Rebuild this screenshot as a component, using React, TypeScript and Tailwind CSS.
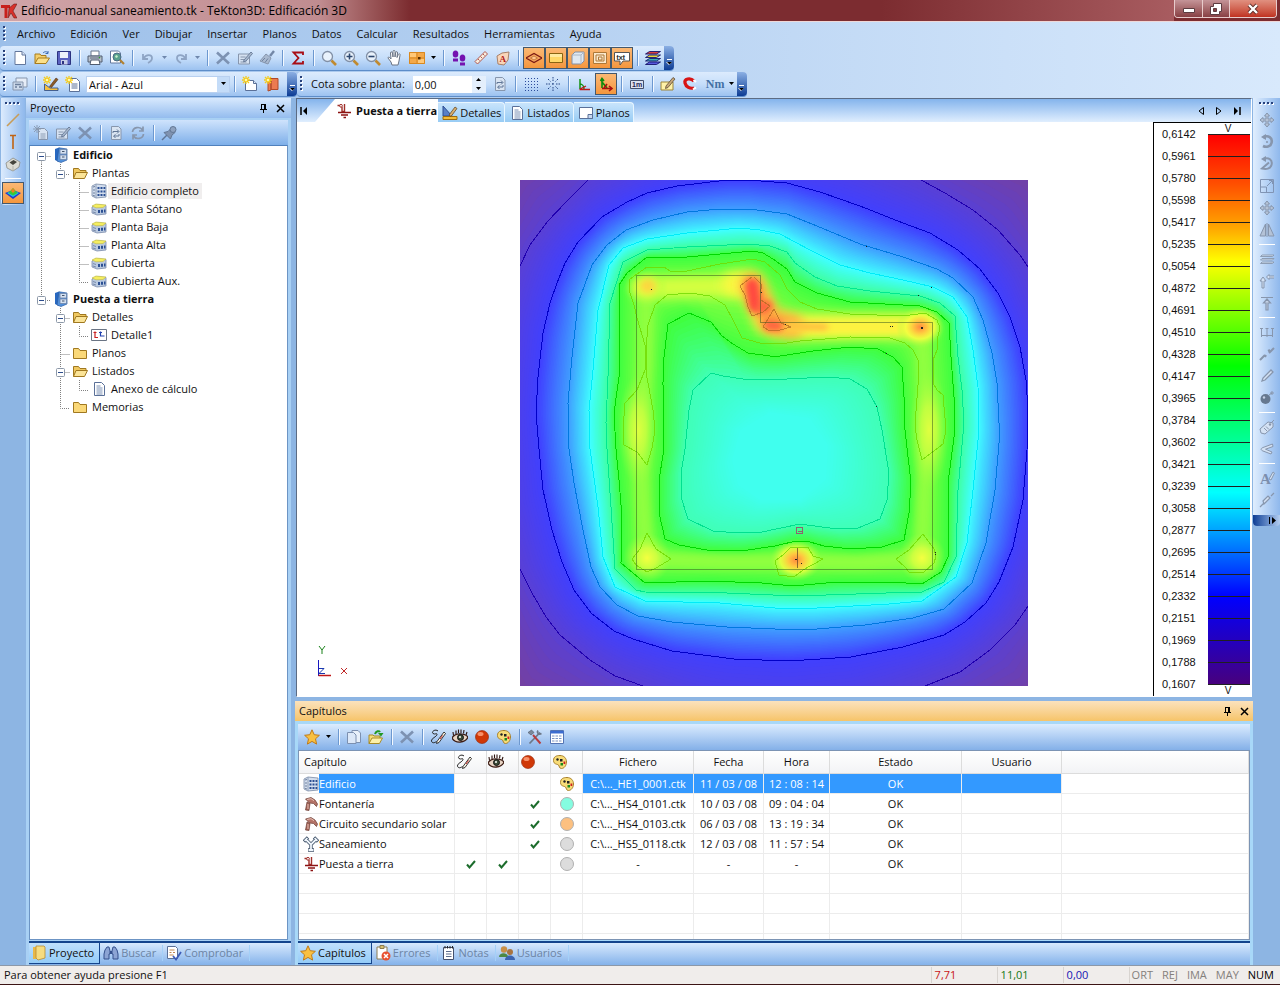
import React from "react";

/* ---------- icons (16x16 grid) ---------- */

const GREY = "#8796ad";

const sparkle = (
  <>
    <path d="M4 0v8M0 4h8M1 1l6 6M7 1L1 7" stroke="#f6cc18" strokeWidth="1.300" />
    <circle cx="4" cy="4" r="1.300" fill="#fff8b0" />
  </>
);

const building = (
  <>
    <path d="M1 3l4-2 10 1v12l-10 1-4-2z" fill="#d3deee" stroke="#7789a5" strokeWidth=".8" />
    <path d="M5 1v14" stroke="#8f9fb8" />
    <path d="M2 4l2-.5M2 7h2M2 10h2M2 12.500l2 .5" stroke="#6f809c" />
    <path d="M6.500 4h2v2h-2zM9.500 4h2v2h-2zM12.500 4h1.800v2h-1.800zM6.500 7.500h2v2h-2zM9.500 7.500h2v2h-2zM12.500 7.500h1.800v2h-1.800zM6.500 11h2v2h-2zM9.500 11h2v2h-2zM12.500 11h1.800v2h-1.800z" fill="#2b4f93" />
  </>
);

const palette = (
  <>
    <path d="M8 1.500c4 0 6.500 2.800 6.500 6.500S12 14.500 9.500 14.500 7.500 12 6.500 11 1.500 10.500 1.500 6.500 4.500 1.500 8 1.500z" fill="#f8dc78" stroke="#a8802a" />
    <circle cx="5.500" cy="5.500" r="1.200" fill="#222" />
    <path d="M8 5h2.500v2.500H8z" fill="#222" />
    <path d="M8.500 9h2.500v2.500H8.500z" fill="#1a8a1a" />
    <path d="M11.500 7.500h1.800v2.500h-1.800z" fill="#d02020" />
  </>
);

const ground = (
  <>
    <path d="M1.500 2.500h3M8.500 1v8M6 4v4.500h2" stroke="#a0302a" strokeWidth="1.400" fill="none" />
    <circle cx="5" cy="2.800" r="1.400" fill="#fff" stroke="#a0302a" />
    <path d="M2 9.500h13M5 12h7M7.500 14.500h2.500" stroke="#8c1212" strokeWidth="1.700" />
  </>
);

const sheet = <path d="M3.500 1.500h7l3 3v10h-10z" fill="#fff" stroke="#5a7098" />;

const star = <path d="M8 .8l2.200 4.900 5.200.6-3.900 3.500 1.100 5.300L8 12.400l-4.600 2.700 1.100-5.300L.6 6.300l5.200-.6z" fill="#f9c040" stroke="#c07a18" />;

const ICONS: Record<string, React.ReactNode> = {
  logo: (
    <>
      <path d="M0 2h9v3H6.500v10h-3V5H0z" fill="#c8201c" />
      <path d="M8 5l-1 10 3-5 3 5h3l-4-7 4-7h-3z" fill="#d8302a" stroke="#5a1210" strokeWidth=".5" />
    </>
  ),
  new: (
    <>
      <path d="M3 1.500h7l3.500 3.500v9.500H3z" fill="#fff" stroke="#63779c" />
      <path d="M10 1.500V5h3.500" fill="#dbe6f6" stroke="#63779c" />
    </>
  ),
  open: (
    <>
      <path d="M1 13.500V4h5l1 1.500h5V8" fill="#f4cf6c" stroke="#a87c1c" />
      <path d="M1 13.500L4 8h11.500l-3.500 5.500z" fill="#fbe08a" stroke="#a87c1c" />
      <path d="M9 3c2-2 4-1.500 5 0m0-2v2.500h-2.500" fill="none" stroke="#3a68b0" />
    </>
  ),
  save: (
    <>
      <path d="M1.500 1.500h13v13h-13z" fill="#5a62c0" stroke="#2c3380" />
      <path d="M4 2h8v6H4z" fill="#eef2fb" />
      <path d="M5 10h6.500v4.500H5z" fill="#c8cfe8" />
      <path d="M6 11h2v3H6z" fill="#2c3380" />
    </>
  ),
  print: (
    <>
      <path d="M4 1h8v5H4z" fill="#fff" stroke="#68768c" />
      <path d="M1 6h14v6H1z" fill="#b9c1cc" stroke="#505c70" />
      <path d="M4 10h8l1 4.500H3z" fill="#fff" stroke="#505c70" />
      <path d="M3 8h10" stroke="#606a7c" />
      <circle cx="12.500" cy="7.500" r=".8" fill="#2aa02a" />
    </>
  ),
  preview: (
    <>
      <path d="M1.500 1h8l2 2v10h-10z" fill="#fff" stroke="#63779c" />
      <circle cx="8" cy="7" r="4" fill="#58a08c" stroke="#4c6a86" />
      <path d="M11 10l4 4" stroke="#b08030" strokeWidth="2.200" />
      <path d="M6 6l2-1 1 2-2 1z" fill="#c8f0c8" />
    </>
  ),
  undo: <path d="M3 4v5h5M3.500 8.500C6 4 12 4 12 8c0 3-2 4-4 5" fill="none" stroke="#8ea4c4" strokeWidth="1.800" />,
  redo: <path d="M13 4v5H8M12.500 8.500C10 4 4 4 4 8c0 3 2 4 4 5" fill="none" stroke="#8ea4c4" strokeWidth="1.800" />,
  cut: <path d="M2 2.500l12 11M14 2.500L2 13.500" stroke="#7d92b2" strokeWidth="2.600" />,
  edit: (
    <>
      <path d="M1.500 4h11v10h-11z" fill="#d5e1f1" stroke={GREY} />
      <path d="M3.500 7h5M3.500 9.500h4M3.500 12h6" stroke={GREY} />
      <path d="M7 10L14 2l1.500 1.500L9 11l-2.500.8z" fill="#a9b9cf" stroke="#6c7f9c" />
    </>
  ),
  brush: (
    <>
      <path d="M15 1l-4 5" stroke="#7387a6" strokeWidth="2.400" />
      <path d="M7 4l5 4-3 6-8-3z" fill="#a9b9cf" stroke={GREY} />
      <path d="M3 11l3-3M6 12.500l3-4" stroke="#6f82a0" />
    </>
  ),
  sigma: <path d="M13 5V2.500H3.500L8.500 8l-5 5.500H13V11" fill="none" stroke="#a80c14" strokeWidth="1.800" />,
  zoom: (
    <>
      <circle cx="6.500" cy="6.500" r="5" fill="#e9f2fc" stroke="#8290a6" strokeWidth="1.300" />
      <path d="M10.500 10.500l4.500 4.500" stroke="#c08a30" strokeWidth="2.600" />
    </>
  ),
  zoomIn: (
    <>
      <circle cx="6.500" cy="6.500" r="5" fill="#e9f2fc" stroke="#8290a6" strokeWidth="1.300" />
      <path d="M10.500 10.500l4.500 4.500" stroke="#c08a30" strokeWidth="2.600" />
      <path d="M3.500 6.500h6M6.500 3.500v6" stroke="#2c466e" strokeWidth="1.600" />
    </>
  ),
  zoomOut: (
    <>
      <circle cx="6.500" cy="6.500" r="5" fill="#e9f2fc" stroke="#8290a6" strokeWidth="1.300" />
      <path d="M10.500 10.500l4.500 4.500" stroke="#c08a30" strokeWidth="2.600" />
      <path d="M3.500 6.500h6" stroke="#2c466e" strokeWidth="1.600" />
    </>
  ),
  hand: <path d="M5 15l-1-3-3-4c0-1.500 1.500-1 3 1L3.500 3c0-1.500 1.500-1.500 2 0L6 7V1.500c0-1.500 2-1.500 2 0V7l.7-4.500c.3-1.500 2-1 1.800.5L10 7.500l1.300-3c.7-1.300 2-.7 1.700.7L12 11l-1 4z" fill="#fff" stroke="#6a7484" />,
  views: (
    <>
      <path d="M0 2h16v12H0z" fill="#f4a848" />
      <path d="M.5 2.500h15v11H.5zM8 2v12M0 8h16" fill="none" stroke="#d88820" />
      <path d="M1 3h6v4H1zM9 9h6v4H9z" fill="#ffc878" />
      <path d="M9 7h2.500v2.500H9z" fill="#5a3000" />
    </>
  ),
  feet: (
    <>
      <ellipse cx="4.500" cy="4" rx="2.800" ry="3.500" fill="#7412b0" />
      <path d="M2 8.500h5v3H2z" fill="#7412b0" />
      <ellipse cx="11.500" cy="8" rx="2.800" ry="3.500" fill="#7412b0" />
      <path d="M9 12.500h5v3H9z" fill="#7412b0" />
    </>
  ),
  ruler: (
    <>
      <path d="M2 11.500L12 1.500 14.500 4l-10 10z" fill="#f8ecdc" stroke="#b05850" />
      <path d="M5 9l1.500 1.500M7.500 6.500L9 8M10 4l1.500 1.500" stroke="#b05850" />
    </>
  ),
  areaTag: (
    <>
      <path d="M2 6l5-3 7-1-1 8-4 5-6-1z" fill="#f9d5b8" stroke="#a88068" />
      <text x="4.500" y="12" fontSize="9" fontWeight="bold" fill="#b01818" fontFamily="Liberation Serif">A</text>
    </>
  ),
  slab: (
    <>
      <path d="M0 8l8-4.500L16 8l-8 4.500z" fill="#f8a860" stroke="#7c1a14" strokeWidth="1.300" />
      <path d="M4.500 8l3.500-2 3.500 2L8 10z" fill="#ffc890" stroke="#b86830" strokeWidth=".8" />
    </>
  ),
  plate: (
    <>
      <path d="M1.500 3.500h13v9h-13z" fill="#ffd868" stroke="#8a6412" />
      <path d="M2 4h12v3H2z" fill="#ffeaa0" />
    </>
  ),
  cube: (
    <>
      <path d="M2 5l3-3h9v9l-3 3H2z" fill="#dfe8f2" stroke="#8290a6" />
      <path d="M2 5h9v9M11 5l3-3" fill="none" stroke="#aab6c6" />
    </>
  ),
  frames: <path d="M1.500 2.500h13v11h-13zM4 5h8v6H4zM6.500 7h3.500v3H6.500z" fill="#fbe8cc" stroke="#ae7838" />,
  txt: (
    <>
      <path d="M.5 2.500h15v8.500H9L6 15v-4H.5z" fill="#fff" stroke="#555" />
      <text x="2.500" y="9.500" fontSize="8" fill="#111" stroke="#111" strokeWidth=".2" fontFamily="Liberation Sans">txt</text>
    </>
  ),
  layers: (
    <>
      <path d="M4.500 1.500h11l-4 2.500H.5z" fill="#d84040" stroke="#14146c" strokeWidth=".9" />
      <path d="M4.500 5h11l-4 2.500H.5z" fill="#e8d838" stroke="#14146c" strokeWidth=".9" />
      <path d="M4.500 8.500h11l-4 2.500H.5z" fill="#38b0b8" stroke="#14146c" strokeWidth=".9" />
      <path d="M4.500 12h11l-4 2.500H.5z" fill="#5858e0" stroke="#14146c" strokeWidth=".9" />
    </>
  ),
  calc: (
    <>
      <path d="M4 2h11v9H4z" fill="#e6edf7" stroke={GREY} />
      <path d="M1 6h10v8H1z" fill="#cddaeb" stroke={GREY} />
      <path d="M3 8.500h6M3 11h2M7 11h3" stroke="#6c7f9c" strokeWidth="1.300" />
    </>
  ),
  draw: (
    <>
      <path d="M1.500 8v6.500h13.500V12H7z" fill="#f4c040" stroke="#34548c" strokeWidth=".9" />
      <path d="M6.500 10.500l6.500-8.500 2 1.500-6.500 8z" fill="#8c5a28" stroke="#503010" strokeWidth=".6" />
      {sparkle}
    </>
  ),
  detail: (
    <>
      <path d="M1 1v10h9z" fill="#5880c8" stroke="#2c4c90" />
      <path d="M1 11.500h14v3H1z" fill="#f4bc38" stroke="#9c6c10" />
      <path d="M7 10l6-8 2 1.500-6 8z" fill="#d8b070" stroke="#5a3c18" strokeWidth=".7" />
    </>
  ),
  newDoc: (
    <>
      <path d="M4.500 2.500h7l3 3v10h-10z" fill="#fff" stroke="#5a7098" />
      <path d="M6.500 8h6M6.500 10h6M6.500 12h6" stroke="#5a7098" />
      {sparkle}
    </>
  ),
  newPlan: (
    <>
      <path d="M3.500 4.500h8l3 3v7h-11z" fill="#fff" stroke="#5a7098" />
      <path d="M11.500 4.500v3h3" fill="#dce8f8" stroke="#5a7098" />
      {sparkle}
    </>
  ),
  book: (
    <>
      <path d="M4 4l3-2v12l-3 1zM7 2.500h7v11H7z" fill="#ec7a50" stroke="#b04a28" />
      {sparkle}
    </>
  ),
  refreshDoc: (
    <>
      <path d="M3.500 1.500h7l2.500 2.500v10.500h-9.500z" fill="#d9e4f2" stroke={GREY} />
      <path d="M5 8V6.500h5.500M9 4.500l2 2-2 2M11 9v2H6M7.500 9.500L5.500 11l2 2" fill="none" stroke="#5f7596" />
    </>
  ),
  dots: (
    <path d="M2 2.500h14M2 5.500h14M2 8.500h14M2 11.500h14M2 14.500h14" stroke="#2c4c9c" strokeDasharray="1 2" />
  ),
  burst: (
    <path d="M8 1v4M8 11v4M1 8h4M11 8h4M3 3l2.500 2.500M10.500 10.500L13 13M13 3l-2.500 2.500M3 13l2.500-2.500M8 7v2M7 8h2" stroke="#244484" strokeDasharray="1.500 1" />
  ),
  ortho: (
    <>
      <path d="M4 3v10M4 8c2 0 4 2 4 5" fill="none" stroke="#109010" strokeWidth="1.500" />
      <path d="M3.500 13.500h10.500M4 13l6-3" stroke="#c01818" strokeWidth="1.300" />
    </>
  ),
  polar: (
    <>
      <path d="M4 3v9M2.500 5L4 2.500 6 5M4 6l5 6" fill="none" stroke="#0c8c0c" strokeWidth="1.600" />
      <path d="M4 12.500h9M11 10l3 2.500-3 2.500M6 12l3-4" fill="none" stroke="#a81010" strokeWidth="1.600" />
    </>
  ),
  meter: (
    <>
      <path d="M1.500 4.500h13v8h-13z" fill="#dce2f0" stroke="#44506c" />
      <text x="3" y="11" fontSize="7" fontWeight="bold" fill="#1c2450" fontFamily="Liberation Sans">1m</text>
    </>
  ),
  note: (
    <>
      <path d="M1 6h12v8H1z" fill="#fff2a8" stroke="#9c8438" />
      <path d="M6 10l7-8.500 2 1.500-7 8.500-2.500 1z" fill="#c8a878" stroke="#4c3c28" strokeWidth=".7" />
    </>
  ),
  magnet: (
    <>
      <path d="M12 5C8 1 2 3 3 7s5 6 9 5" fill="none" stroke="#d81414" strokeWidth="3.200" />
      <path d="M11.500 4l2.500 2M11 13.500l3-2" stroke="#fff" strokeWidth="2" />
    </>
  ),
  line: <path d="M2 14L14 2" stroke="#c89c58" strokeWidth="1.600" />,
  stake: <path d="M5 1.500h6M8 2v13" stroke="#c06414" strokeWidth="1.600" />,
  box: (
    <>
      <path d="M1 7l7-5 7 4-1 5-6 4-6-3z" fill="#dcdcd4" stroke="#8c8c84" strokeWidth=".8" />
      <path d="M4.500 6.500l4-2.500 3.500 2-4 3z" fill="#44443c" />
      <path d="M8 10v5" stroke="#b4b4ac" />
    </>
  ),
  surface: (
    <>
      <path d="M0 8l8-3 8 3-8 6z" fill="#2038d0" />
      <path d="M2 8l6-3 6 3-6 4z" fill="#20c0e0" />
      <path d="M3.500 8L8 3l4.500 5L8 10.500z" fill="#38c838" />
      <path d="M6 6l2-3 2 3-2 2z" fill="#f08020" />
    </>
  ),
  newGrey: (
    <>
      <path d="M5.500 3.500h6l3 3v8h-9z" fill="#d9e4f2" stroke={GREY} />
      <path d="M7.500 9h5M7.500 11h5M7.500 13h5M4 0v8M0 4h8M1 1l6 6M7 1L1 7" stroke={GREY} strokeWidth=".9" />
    </>
  ),
  cycle: <path d="M2.500 7C3 2 10 1 12.500 5M13 1.500V6H9M13.500 9C13 14 6 15 3.500 11M3 14.500V10h4" fill="none" stroke={GREY} strokeWidth="1.700" />,
  pushpin: (
    <>
      <path d="M1 15l5-5" stroke="#5f7596" strokeWidth="1.500" />
      <path d="M3 7.500l4-1 3-3 4 4-3 2.500-1.500 4z" fill="#7f92b0" stroke="#637794" />
      <circle cx="12" cy="4.500" r="3" fill="#8ea1be" stroke="#637794" />
    </>
  ),
  cabinet: (
    <>
      <path d="M2 2l4-1.500V15L2 13z" fill="#2868c0" />
      <path d="M6 .8L14 2v11l-6 2.500L4 14z" fill="#5090dc" stroke="#2c5ca0" strokeWidth=".7" />
      <path d="M7 2.500h6.500V7H7zM7 8h6.500v4.500H7z" fill="#d4e0f0" stroke="#6c84a8" strokeWidth=".8" />
      <path d="M9 4.500h2.500M9 10h2.500" stroke="#44546c" />
    </>
  ),
  folderOpen: (
    <>
      <path d="M1.500 13.500V3.500h5l1.500 2h6V8" fill="#f0c860" stroke="#a07820" />
      <path d="M1.500 13.500L4 7.500h11.500l-3 6z" fill="#fbe498" stroke="#a07820" />
    </>
  ),
  folder: <path d="M1.500 13.500V3.500h5l1.500 2h6.500v8z" fill="#fad878" stroke="#a07820" />,
  building,
  floor: (
    <>
      <path d="M1 6l4-2.500L15 4.500V13l-9 1-5-2z" fill="#b9c9e0" stroke="#7b8cab" strokeWidth=".8" />
      <path d="M1 5l4-2 10 1-3 2.500-7 .3z" fill="#f5ee60" stroke="#c0b840" strokeWidth=".6" />
      <path d="M2 8.500l3 1M2 11l3 1" stroke="#7b8cab" />
      <path d="M7 9h2v3H7zM10 8.700h2v3h-2zM13 8.500h1.500v3H13z" fill="#2b4f93" />
    </>
  ),
  detalle: (
    <>
      <path d="M.5 2.500h15v11H.5z" fill="#fff" stroke="#6a7484" />
      <path d="M4 4.500v6h3M2.500 5.500h3" fill="none" stroke="#c82020" strokeWidth="1.200" />
      <path d="M9.500 4.500v4.500h4M8 5.500h3" fill="none" stroke="#2040b0" strokeWidth="1.200" />
    </>
  ),
  doc: (
    <>
      {sheet}
      <path d="M5.500 5h4M5.500 7h6M5.500 9h6M5.500 11h6M5.500 13h6" stroke="#6c84ac" strokeWidth=".9" />
    </>
  ),
  plan: (
    <>
      <path d="M1.500 2.500h13v11h-13z" fill="#fff" stroke="#5a7098" />
      <path d="M10 9.500h4.500v4H10z" fill="#c8d8f0" stroke="#5a7098" />
    </>
  ),
  ground,
  star,
  copy: (
    <>
      <path d="M6 1.500h6l2.500 2.500v9.500H6z" fill="#e8f0fa" stroke="#7c90b0" />
      <path d="M1.500 3.500h6L10 6v8.500H1.500z" fill="#dce8f8" stroke="#7c90b0" />
    </>
  ),
  import: (
    <>
      <path d="M1 14.500V6h4l1 1h6v2" fill="#f4dc78" stroke="#a88c28" />
      <path d="M1 14.500L4 9h10.500l-3 5.500z" fill="#fdf0a8" stroke="#a88c28" />
      <path d="M7 5c1-3 4-3.500 5-2" fill="none" stroke="#209820" strokeWidth="2" />
      <path d="M10 4h5.500l-2.500 3.500z" fill="#209820" />
    </>
  ),
  pens: (
    <>
      <path d="M8 2C5-.5 1 3 3 4.500s4-1 4 1-6 4-5.500 6.500 3 2 5 .5" fill="none" stroke="#222" strokeWidth="1" />
      <path d="M7 12.500l7-9.500 1.500 1.500L9 13.500l-2.500 1z" fill="#fff8e8" stroke="#222" strokeWidth=".9" />
      <path d="M10 10l2.500-3.500" stroke="#c82828" strokeWidth="1" />
    </>
  ),
  eye: (
    <>
      <path d="M0 9c3-5 12-5.500 16-1-2 6-13 7-16 1z" fill="#e8d4c4" stroke="#3c1c14" strokeWidth="1.300" />
      <circle cx="8.500" cy="8.500" r="3" fill="#3c4c38" stroke="#111" />
      <circle cx="8" cy="8" r="1" fill="#fff" />
      <path d="M1.500 6.500L1 3M4 5V1.500M6.500 4V.5M9 4V.5M11.500 4.500L12 1M14 6l1-3" stroke="#2c120c" strokeWidth="1.100" />
    </>
  ),
  ball: (
    <>
      <circle cx="8" cy="8" r="6.500" fill="#d03808" stroke="#902000" strokeWidth=".6" />
      <ellipse cx="6.500" cy="5" rx="3" ry="2" fill="#f89068" />
    </>
  ),
  palette,
  tools: (
    <>
      <path d="M2.500 14.500L13 3.500" stroke="#6c7888" strokeWidth="1.800" />
      <path d="M11 1.500c-1.500 2 .5 4.500 3.500 3" fill="none" stroke="#6c7888" strokeWidth="1.800" />
      <path d="M1 3.500L4.500 1 7 3.500 4 6z" fill="#7c8898" stroke="#4c5868" strokeWidth=".6" />
      <path d="M6 6l7.500 8.500" stroke="#b83c3c" strokeWidth="1.900" />
    </>
  ),
  grid: (
    <>
      <path d="M1.500 1.500h13v13h-13z" fill="#fff" stroke="#5474b4" />
      <path d="M1.500 2h13v2.500h-13z" fill="#3c6cd0" />
      <path d="M3 7h10M3 9.500h10M3 12h10" stroke="#7c94c4" strokeWidth="1.200" strokeDasharray="2.500 1" />
    </>
  ),
  tap: (
    <>
      <path d="M2.500 3L8 1.500l4 2.500 2.500 4-1 2.500-3-3-4-.5z" fill="#b47468" stroke="#6c3c34" strokeWidth=".7" />
      <path d="M4 6l3 1.500-1 7-3.500-.5z" fill="#a46458" stroke="#6c3c34" strokeWidth=".7" />
      <path d="M4 3.500l4-.8 3 2M5 8v5" stroke="#e8c0b4" />
    </>
  ),
  pipes: (
    <>
      <path d="M3 3.500l5 5 5-5M8 8v6M1 5.500l4-4M11 1.500l4 4M5 14h6" fill="none" stroke="#44566c" strokeWidth="3.400" />
      <path d="M3 3.500l5 5 5-5M8 8v6M1.600 4.900l2.800-2.800M11.600 2.100l2.800 2.800M5.500 14h5" fill="none" stroke="#f0f6fc" strokeWidth="1.800" />
    </>
  ),
  check: <path d="M4 8.500l2.500 3L12 5" fill="none" stroke="#1c6c2c" strokeWidth="2" />,
  binoculars: (
    <>
      <path d="M2 5l2-3h2l1 4v3H6v5H1V9zM14 5l-2-3h-2L9 6v3h1v5h5V9z" fill="#8ca4d4" stroke="#34508c" />
      <path d="M7 6h2v3H7z" fill="#34508c" />
    </>
  ),
  folderTab: (
    <>
      <path d="M2 2h5v12H2z" fill="#e8b848" />
      <path d="M5 1h8l1 1v11l-7 2-2-2z" fill="#f6dc80" stroke="#b88c30" strokeWidth=".8" />
    </>
  ),
  checkDoc: (
    <>
      <path d="M1.500 1.500h8l2 2v10h-10z" fill="#fff" stroke="#5a7098" />
      <path d="M3.500 5h5M3.500 7.500h2M7 7.500h2M3.500 10h4" stroke="#c08850" />
      <path d="M7 11l3 3.500L15 7" fill="none" stroke="#3c5cb8" strokeWidth="1.800" />
    </>
  ),
  errors: (
    <>
      <path d="M2 2h10v12H2z" fill="#fff" stroke="#8c7c50" />
      <path d="M5 .5h4v3H5z" fill="#d8c070" stroke="#8c7c50" />
      <circle cx="11" cy="11" r="4.500" fill="#e85030" />
      <path d="M9 9l4 4M13 9l-4 4" stroke="#fff" strokeWidth="1.500" />
    </>
  ),
  notes: (
    <>
      <path d="M2.500 2.500h10v12h-10z" fill="#fff" stroke="#44506c" />
      <path d="M4 1v2.500M6.500 1v2.500M9 1v2.500M11.500 1v2.500" stroke="#222" />
      <path d="M5 6.500h5.500M5 9h5.500M5 11.500h5.500" stroke="#5c6c8c" />
    </>
  ),
  users: (
    <>
      <circle cx="5" cy="4.500" r="3.200" fill="#c89048" />
      <path d="M0 12c0-5 9-5 9 0z" fill="#4c8844" />
      <circle cx="11" cy="7" r="3" fill="#a87440" />
      <path d="M6 15c0-6 10-6 10 0z" fill="#3c64b0" />
    </>
  ),
  move: <path d="M8 1l2.500 3H9v3h3V5.500L15 8l-3 2.500V9H9v3h1.500L8 15l-2.500-3H7V9H4v1.500L1 8l3-2.500V7h3V4H5.500z" fill="#b4c2d6" stroke={GREY} />,
  rotate: (
    <>
      <path d="M4 3.500c5-3 10 0 8.500 5.500-1 4-5.500 4.500-8.500 3" fill="none" stroke={GREY} strokeWidth="2.600" />
      <path d="M7 0v6L2 3z" fill={GREY} />
      <path d="M7 8h2" stroke={GREY} strokeWidth="1.500" />
    </>
  ),
  rotate2: (
    <>
      <path d="M4 3.500c5-3 10 0 8.500 5.500-1 4-5.500 4.500-9.500 3.500l7-6" fill="none" stroke={GREY} strokeWidth="2" />
      <path d="M7 0v6L2 3z" fill={GREY} />
    </>
  ),
  scale: <path d="M1.500 1.500h13v13h-13zM1.500 9h6v5.500M8 8l5-5M10 2.500h3.500V6" fill="none" stroke="#8094b4" />,
  mirror: <path d="M6.500 2v12H1zM9.500 2v12H15zM8 1v14" fill="#b4c2d6" stroke={GREY} />,
  parallel: (
    <path d="M3 4h12l-1.500 1.500h-12zM3 7.500h12L13.500 9h-12zM3 11h12l-1.500 1.500h-12z" fill="#d4e2f4" stroke={GREY} strokeWidth=".9" />
  ),
  trim: <path d="M3 15V8H1l3-4 3 4H5v7zM15 5H10v1.500L7.500 4 10 1.500V3h5" fill="#d4e2f4" stroke={GREY} />,
  extend: <path d="M2 2.500h12M7 15V8H4.500L8 4l3.500 4H9v7z" fill="#c4d2e6" stroke={GREY} strokeWidth="1.200" />,
  array: <path d="M2.500 4v9M8 4v9M13.500 4v9M2 11.500h12M1 4.500h3M6.500 4.500h3M12 4.500h3" stroke={GREY} />,
  split: <path d="M1 14l5-5M7 9l-1 2M10 7l5-5M9 5l2-1" stroke={GREY} strokeWidth="2" />,
  knife: <path d="M3 13l1-3 8-8 2 2-8 8z" fill="#d4e2f4" stroke={GREY} strokeWidth="1.300" />,
  bomb: (
    <>
      <circle cx="6.500" cy="9" r="5" fill="#66788f" />
      <path d="M10 5l3-2M13 1v4M11 3h4" stroke={GREY} />
      <circle cx="5" cy="7.500" r="1.200" fill="#c4d2e6" />
    </>
  ),
  tag: (
    <>
      <path d="M1 10l8-7 5 1v4l-8 7-4-1z" fill="#d4e2f4" stroke={GREY} />
      <circle cx="11" cy="5.500" r="1.200" fill={GREY} />
      <path d="M12 4l3-3M5 9l3 3M7 7.500l3 3" stroke={GREY} />
    </>
  ),
  curve: <path d="M13.500 3L4 6.500c-2.500 1-2.500 2.500 0 3.500l8 3 1-2-6.500-2.800L14 5.500z" fill="#d4e2f4" stroke={GREY} />,
  textA: (
    <>
      <text x="1" y="14" fontSize="15" fontWeight="bold" fill="#7c8fae" fontFamily="Liberation Serif">A</text>
      <path d="M10 9l4-7 1.500 1-3.500 7z" fill="#d4e2f4" stroke={GREY} />
    </>
  ),
  dim: <path d="M1 15l4-4M12 4l3-3M5 12l-1-3 5-5 2 2-5 5z" fill="#d4e2f4" stroke={GREY} strokeWidth="1.200" />,
};

function Icon({ name }: { name: string }) {
  return (
    <svg viewBox="0 0 16 16" className="h-4 w-4 shrink-0" fill="none" aria-hidden="true">
      {ICONS[name]}
    </svg>
  );
}

/* ---------- toolbar parts ---------- */

function Tool({ icon, label, on }: { icon: string; label: string; on?: boolean }) {
  return (
    <button
      type="button"
      aria-label={label}
      aria-pressed={on}
      className={
        on
          ? "flex h-[22px] w-[22px] shrink-0 items-center justify-center border border-[#44586c] bg-linear-to-b from-[#fbb874] to-[#f4963c]"
          : "flex h-[22px] w-[22px] shrink-0 items-center justify-center"
      }
    >
      <Icon name={icon} />
    </button>
  );
}

const Sep = () => <span className="mx-1 h-4 w-px shrink-0 bg-[#6c98d0] shadow-[1px_0_0_#f4f9ff]" />;

const Grip = () => (
  <svg viewBox="0 0 3 16" className="mx-[3px] h-4 w-[3px] shrink-0" aria-hidden="true">
    <path d="M1 1h2v2H1zM1 5h2v2H1zM1 9h2v2H1zM1 13h2v2H1z" fill="#fff" />
    <path d="M0 0h2v2H0zM0 4h2v2H0zM0 8h2v2H0zM0 12h2v2H0z" fill="#27417c" />
  </svg>
);

const Arrow = ({ muted, label }: { muted?: boolean; label: string }) => (
  <button type="button" aria-label={label} className="flex h-[22px] w-[11px] shrink-0 items-center justify-center">
    <svg viewBox="0 0 7 4" className="h-1 w-[7px]" aria-hidden="true">
      <path d="M1 0h5L3.500 3z" fill={muted ? "#6f87ac" : "#000"} />
    </svg>
  </button>
);

const EndCap = ({ label }: { label: string }) => (
  <button
    type="button"
    aria-label={label}
    className="flex w-[10px] shrink-0 items-end justify-center self-stretch rounded-r bg-linear-to-b from-[#8cb0e4] to-[#0c3c94] pb-1"
  >
    <svg viewBox="0 0 7 7" className="h-[7px] w-[7px]" aria-hidden="true">
      <path d="M1 0h5v1H1zM0 3h6L3 6z" fill="#fff" />
      <path d="M1 3h5L3.500 5.500z" fill="#000" />
    </svg>
  </button>
);

const barClass =
  "flex h-[25px] shrink-0 items-center rounded-l-sm rounded-r bg-linear-to-b from-[#dcebfd] via-[#c6defa] to-[#9cc2f0] border-b border-[#5d8dc9]";

const MENUS = ["Archivo", "Edición", "Ver", "Dibujar", "Insertar", "Planos", "Datos", "Calcular", "Resultados", "Herramientas", "Ayuda"];

function TitleBar() {
  return (
    <header className="flex h-[22px] shrink-0 items-start border-b border-[#f0d8d8] bg-linear-to-r from-[#d0a4a8] from-0% via-[#c08c90] via-25% to-[#7c2c30] to-32% pl-px">
      <div className="flex h-[21px] grow items-center gap-1 bg-linear-to-r from-transparent from-75% to-[#a85c60] text-[12px] text-black">
        <Icon name="logo" />
        <h1>Edificio-manual saneamiento.tk - TeKton3D: Edificación 3D</h1>
      </div>
      <div className="mr-[3px] flex h-[18px] overflow-hidden rounded-b border border-t-0 border-[#e8cccc] bg-[#a86468]">
        <button type="button" aria-label="Minimizar" className="flex w-7 items-center justify-center border-r border-[#e8cccc] bg-linear-to-b from-[#c49498] to-[#884044]">
          <svg viewBox="0 0 12 12" className="h-3 w-3"><path d="M.5 5.500h11v4H.5z" fill="#fff" stroke="#5c3c40" /></svg>
        </button>
        <button type="button" aria-label="Restaurar" className="flex w-[27px] items-center justify-center border-r border-[#e8cccc] bg-linear-to-b from-[#c49498] to-[#884044]">
          <svg viewBox="0 0 12 12" className="h-3 w-3"><path d="M3.500.5h8v8h-2v3h-9v-8h3z" fill="#fff" stroke="#5c3c40" /><path d="M3.500 5.500h3v3h-3z" fill="#884044" stroke="#5c3c40" /></svg>
        </button>
        <button type="button" aria-label="Cerrar" className="flex w-[46px] items-center justify-center bg-linear-to-b from-[#e09080] to-[#c03020]">
          <svg viewBox="0 0 12 12" className="h-3 w-3"><path d="M2 2l8 8M10 2l-8 8" stroke="#5c2c28" strokeWidth="4" /><path d="M2 2l8 8M10 2l-8 8" stroke="#fff" strokeWidth="2.400" /></svg>
        </button>
      </div>
    </header>
  );
}

function Toolbars() {
  return (
    <div className="shrink-0 bg-linear-to-r from-[#9cbfe9] to-[#d8e9fc]">
      <nav className="flex h-6 items-center">
        <Grip />
        <ul className="flex gap-px pl-px">
          {MENUS.map((m) => (
            <li key={m}>
              <button type="button" className="px-[7px]">{m}</button>
            </li>
          ))}
        </ul>
      </nav>
      <div className="flex h-[26px]">
        <div className={barClass}>
          <Grip />
          <Tool icon="new" label="Nuevo" />
          <Tool icon="open" label="Abrir" />
          <Tool icon="save" label="Guardar" />
          <Sep />
          <Tool icon="print" label="Imprimir" />
          <Tool icon="preview" label="Vista previa" />
          <Sep />
          <Tool icon="undo" label="Deshacer" />
          <Arrow muted label="Lista deshacer" />
          <Tool icon="redo" label="Rehacer" />
          <Arrow muted label="Lista rehacer" />
          <Sep />
          <Tool icon="cut" label="Eliminar" />
          <Tool icon="edit" label="Editar" />
          <Tool icon="brush" label="Copiar formato" />
          <Sep />
          <Tool icon="sigma" label="Calcular" />
          <Sep />
          <Tool icon="zoom" label="Zoom" />
          <Tool icon="zoomIn" label="Acercar" />
          <Tool icon="zoomOut" label="Alejar" />
          <Tool icon="hand" label="Encuadre" />
          <Tool icon="views" label="Vistas" />
          <Arrow label="Lista de vistas" />
          <Sep />
          <Tool icon="feet" label="Recorrer" />
          <Tool icon="ruler" label="Medir distancia" />
          <Tool icon="areaTag" label="Medir área" />
          <Sep />
          <Tool icon="slab" label="Forjados" on />
          <Tool icon="plate" label="Relleno" on />
          <Tool icon="cube" label="Volumen" on />
          <Tool icon="frames" label="Marcos" on />
          <Tool icon="txt" label="Textos" on />
          <Sep />
          <Tool icon="layers" label="Capas" />
          <EndCap label="Más botones estándar" />
        </div>
      </div>
      <div className="flex h-[26px]">
        <div className={barClass}>
          <Grip />
          <Tool icon="calc" label="Propiedades" />
          <Sep />
          <Tool icon="draw" label="Nuevo detalle" />
          <Tool icon="newDoc" label="Nuevo listado" />
          <select aria-label="Estilo de texto" className="ml-[2px] h-[17px] w-[144px] appearance-none border border-[#b8d0f0] bg-white bg-[linear-gradient(#c4dcf8,#c4dcf8)] bg-[length:12px_100%] bg-right bg-no-repeat px-[2px] leading-none">
            <option>Arial - Azul</option>
          </select>
          <span className="pointer-events-none -ml-[13px] flex w-[13px] justify-center">
            <svg viewBox="0 0 7 4" className="h-1 w-[7px]" aria-hidden="true"><path d="M1 0h5L3.500 3z" fill="#000" /></svg>
          </span>
          <Sep />
          <Tool icon="newPlan" label="Nuevo plano" />
          <Tool icon="book" label="Nueva memoria" />
          <span className="w-1" />
          <EndCap label="Más botones de dibujo" />
        </div>
        <div className={barClass}>
          <Grip />
          <label htmlFor="cota" className="pl-[5px] pr-2">Cota sobre planta:</label>
          <input id="cota" defaultValue="0,00" className="h-[17px] w-[59px] bg-white px-[2px]" />
          <span className="flex h-[17px] w-[14px] flex-col bg-[#e4effc]">
            <button type="button" aria-label="Subir cota" className="flex flex-1 items-center justify-center"><svg viewBox="0 0 5 3" className="h-[3px] w-[5px]"><path d="M0 3h5L2.500 0z" /></svg></button>
            <button type="button" aria-label="Bajar cota" className="flex flex-1 items-center justify-center"><svg viewBox="0 0 5 3" className="h-[3px] w-[5px]"><path d="M0 0h5L2.500 3z" /></svg></button>
          </span>
          <span className="w-[3px]" />
          <Tool icon="refreshDoc" label="Actualizar" />
          <Sep />
          <Tool icon="dots" label="Rejilla" />
          <Tool icon="burst" label="Referencia" />
          <Sep />
          <Tool icon="ortho" label="Ortogonal" />
          <Tool icon="polar" label="Polar" on />
          <Sep />
          <Tool icon="meter" label="Cotas" />
          <Sep />
          <Tool icon="note" label="Nota" />
          <Tool icon="magnet" label="Imán" />
          <button type="button" className="pr-px pl-[5px] font-['Liberation_Serif',serif] text-[12px] font-bold text-[#4470a4]">Nm</button>
          <Arrow label="Lista de unidades" />
          <EndCap label="Más botones de cota" />
        </div>
      </div>
    </div>
  );
}

/* ---------- side tool strips ---------- */

const HGrip = () => (
  <svg viewBox="0 0 16 3" className="my-1 h-[3px] w-4 shrink-0" aria-hidden="true">
    <path d="M1 1h2v2H1zM5 1h2v2H5zM9 1h2v2H9zM13 1h2v2h-2z" fill="#fff" />
    <path d="M0 0h2v2H0zM4 0h2v2H4zM8 0h2v2H8zM12 0h2v2h-2z" fill="#27417c" />
  </svg>
);

const HSep = () => <span className="my-[3px] h-px w-4 shrink-0 bg-white" />;

function LeftStrip() {
  return (
    <aside className="w-[26px] shrink-0 pl-px">
      <div className="flex w-6 flex-col items-center rounded-b bg-linear-to-r from-[#dcebfd] to-[#8fb8ec] pb-px">
        <HGrip />
        <Tool icon="line" label="Línea" />
        <Tool icon="stake" label="Pica" />
        <Tool icon="box" label="Arqueta" />
        <HSep />
        <Tool icon="surface" label="Superficie de potencial" on />
      </div>
    </aside>
  );
}

const RIGHT_GROUPS = [
  ["move", "rotate", "rotate2", "scale", "move", "mirror"],
  ["parallel", "trim", "extend"],
  ["array", "split", "knife", "bomb"],
  ["tag", "curve"],
  ["textA", "dim"],
];

function RightStrip() {
  return (
    <aside className="w-[27px] shrink-0">
      <div className="flex flex-col items-center rounded-b bg-linear-to-r from-[#e0eefe] to-[#8fb8ec]">
        <HGrip />
        {RIGHT_GROUPS.map((g, i) => (
          <React.Fragment key={i}>
            {i > 0 && <HSep />}
            {g.map((n, j) => (
              <Tool key={j} icon={n} label={"Modificar " + (i + 1) + "." + (j + 1)} />
            ))}
          </React.Fragment>
        ))}
        <button type="button" aria-label="Más herramientas" className="mt-1 flex h-[11px] w-full items-center justify-end rounded-b bg-linear-to-r from-[#0c3c94] to-[#b4cef0] pr-1">
          <svg viewBox="0 0 7 7" className="h-[7px] w-[7px]"><path d="M0 0h1v7H0zM3 0v7l4-3.500z" fill="#000" /></svg>
        </button>
      </div>
    </aside>
  );
}

/* ---------- project tree ---------- */

type Row = { guides: string; icon: string; text: string; bold?: boolean; sel?: boolean };

/* one guide letter per column: v line, t branch, l last branch, f first root; capitals carry a collapse box */
const TREE: Row[] = [
  { guides: "F", icon: "cabinet", text: "Edificio", bold: true },
  { guides: "vL", icon: "folderOpen", text: "Plantas" },
  { guides: "v t", icon: "building", text: "Edificio completo", sel: true },
  { guides: "v t", icon: "floor", text: "Planta Sótano" },
  { guides: "v t", icon: "floor", text: "Planta Baja" },
  { guides: "v t", icon: "floor", text: "Planta Alta" },
  { guides: "v t", icon: "floor", text: "Cubierta" },
  { guides: "v l", icon: "floor", text: "Cubierta Aux." },
  { guides: "L", icon: "cabinet", text: "Puesta a tierra", bold: true },
  { guides: " T", icon: "folderOpen", text: "Detalles" },
  { guides: " vl", icon: "detalle", text: "Detalle1" },
  { guides: " t", icon: "folder", text: "Planos" },
  { guides: " T", icon: "folderOpen", text: "Listados" },
  { guides: " vl", icon: "doc", text: "Anexo de cálculo" },
  { guides: " l", icon: "folder", text: "Memorias" },
];

const GUIDE_PATHS: Record<string, string> = {
  v: "M9.500 0v18",
  t: "M9.500 0v18M9.500 10.500H19",
  l: "M9.500 0v10.500H19",
  f: "M9.500 10.500V18M9.500 10.500H19",
};

function Guide({ kind }: { kind: string }) {
  const boxed = kind !== kind.toLowerCase();
  return (
    <svg viewBox="0 0 19 18" className="h-[18px] w-[19px] shrink-0" aria-hidden="true">
      <path d={GUIDE_PATHS[kind.toLowerCase()] ?? ""} fill="none" stroke="#808080" strokeDasharray="1 1" />
      {boxed && (
        <>
          <rect x="5.500" y="6.500" width="8" height="8" rx="1" fill="#fff" stroke="#8c98a8" />
          <path d="M7 10.500h5" stroke="#2c4c8c" />
        </>
      )}
    </svg>
  );
}

function PinClose() {
  return (
    <span className="flex gap-2">
      <button type="button" aria-label="Fijar panel">
        <svg viewBox="0 0 9 9" className="h-[9px] w-[9px]"><path d="M2.500.5v5M5.500.5v5M6.500.5v5M2 .5h5M1 5.500h7M4.500 6v3" stroke="#000" fill="none" /></svg>
      </button>
      <button type="button" aria-label="Cerrar panel">
        <svg viewBox="0 0 9 9" className="h-[9px] w-[9px]"><path d="M1 1l7 7M8 1L1 8" stroke="#000" strokeWidth="1.500" /></svg>
      </button>
    </span>
  );
}

function PanelTabs({ items }: { items: { icon: string; text: string }[] }) {
  return (
    <div className="flex h-6 shrink-0 border-t-2 border-[#14448c] bg-linear-to-b from-[#d8e9fd] to-[#84b2ea]">
      {items.map((t, i) => (
        <button
          key={t.text}
          type="button"
          className={
            i === 0
              ? "flex h-[21px] items-center gap-[2px] border-r border-b border-[#14448c] bg-linear-to-b from-[#c0e0fc] to-[#94ccf8] pr-[5px] pl-[2px]"
              : "my-[2px] flex h-4 items-center gap-[2px] border-r border-[#a4d0f8] pr-[6px] pl-[3px] text-[#6c84a4]"
          }
        >
          <Icon name={t.icon} />
          {t.text}
        </button>
      ))}
    </div>
  );
}

function ProjectPanel() {
  return (
    <section className="flex w-[265px] shrink-0 flex-col bg-[#a8d0f4]">
      <div className="flex h-5 shrink-0 items-center justify-between bg-linear-to-b from-[#d8e9fd] to-[#94bcee] pr-[6px] pl-1">
        <h2>Proyecto</h2>
        <PinClose />
      </div>
      <div className="mx-[3px] mt-[2px] flex h-[25px] shrink-0 items-center bg-linear-to-b from-[#cfe3fc] to-[#7eafe9] pl-px">
        <Tool icon="newGrey" label="Nuevo elemento" />
        <Tool icon="edit" label="Editar elemento" />
        <Tool icon="cut" label="Borrar elemento" />
        <Sep />
        <Tool icon="refreshDoc" label="Intercambiar" />
        <Tool icon="cycle" label="Recargar" />
        <Sep />
        <Tool icon="pushpin" label="Anclar" />
      </div>
      <ul className="mx-[3px] grow border border-[#6c94c4] border-t-[#5080bc] bg-white pl-[2px]">
        {TREE.map((r, i) => (
          <li key={i} className="flex h-[18px] items-center">
            {r.guides.split("").map((g, j) => (
              <Guide key={j} kind={g} />
            ))}
            <span className="flex w-[19px] justify-center"><Icon name={r.icon} /></span>
            <span className={r.bold ? "px-[3px] font-bold" : r.sel ? "bg-[#f0eeee] px-[3px]" : "px-[3px]"}>{r.text}</span>
          </li>
        ))}
      </ul>
      <div className="pt-px pl-[3px]">
        <PanelTabs items={[{ icon: "folderTab", text: "Proyecto" }, { icon: "binoculars", text: "Buscar" }, { icon: "checkDoc", text: "Comprobar" }]} />
      </div>
    </section>
  );
}

/* ---------- potential map ---------- */

type Pt = [number, number];

const parse = (s: string): Pt[] => s.split(" ").map((p) => p.split(",").map(Number) as Pt);

const CENTRE: Pt = [782, 440];

const RAW = {
  edge: "420,80 780,40 1128,80 1160,430 1128,786 780,820 420,786 400,430",
  violet: "496,430 505,320 520,266 530,245 548,221 566,202 588,180 650,155 755,142 850,152 921,180 945,193 973,210 998,230 1020,255 1028,267 1050,330 1060,420 1052,530 1028,606 1015,625 990,650 960,672 925,686 860,712 785,725 700,712 643,686 615,676 590,660 560,635 546,617 532,593 520,569 503,510",
  blue: "539,449 536,413 538,377 543,333 550,303 557,283 565,263 578,242 602,217 627,202 647,193 677,186 727,180 748,180 787,183 820,192 860,206 903,223 930,233 958,250 980,269 998,293 1010,317 1020,347 1026,380 1028,410 1027,450 1023,500 1013,547 999,582 986,603 965,622 944,635 903,647 851,657 789,661 734,659 672,651 633,639 614,631 591,613 574,590 562,562 552,530 543,490",
  azure: "569,449 568,403 572,357 578,303 592,265 607,245 626,230 653,220 687,212 720,209 750,209 787,214 817,226 860,244 903,257 937,269 953,278 973,297 983,320 992,353 997,383 999,423 999,443 995,490 986,543 972,583 944,609 913,618 865,625 817,629 775,629 727,627 672,622 638,616 617,605 600,587 591,567 583,530 574,483",
  cyan: "590,449 589,410 593,370 598,310 609,265 623,248 647,239 687,233 740,228 760,230 780,234 810,250 840,265 870,273 903,280 933,287 953,297 967,317 973,350 978,387 979,430 973,490 967,543 956,577 922,601 889,604 817,608 775,608 720,603 645,601 615,587 603,557 598,507",
  spring: "607,449 606,423 608,377 610,303 623,262 647,250 687,247 747,244 770,246 787,252 795,263 815,277 837,286 870,291 920,296 940,303 955,316 958,357 962,390 964,423 958,490 956,557 944,582 922,592 886,593 796,596 727,593 645,592 636,590 615,569 611,507",
  green: "616,449 614,413 619,377 619,285 627,273 647,257 687,257 753,251 763,253 773,259 787,269 795,282 817,293 850,302 920,306 937,312 949,323 951,357 954,397 954,437 948,483 948,557 941,572 922,584 889,582 837,582 793,586 762,583 707,581 645,583 621,563 622,517 619,480",
  ridge: "640,440 645,360 646,288 700,284 752,284 772,322 850,326 922,327 925,380 928,430 924,500 922,559 860,563 797,562 720,562 646,559 642,500",
  greenIn: "664,449 663,383 664,357 668,324 689,313 711,322 722,336 733,344 748,353 770,356 780,356 813,351 850,347 878,349 893,357 902,367 904,397 905,430 911,483 909,513 904,540 882,547 851,549 824,546 810,542 796,541 775,546 741,551 707,550 679,545 665,539 659,513 659,480",
  springIn: "685,449 689,410 693,390 711,373 723,376 743,379 763,380 787,379 827,377 850,379 867,389 877,407 882,430 889,473 887,500 880,519 858,528 837,529 800,524 762,532 738,533 713,531 688,519 681,497 681,473",
  core: "732,460 740,430 770,412 810,418 828,445 826,480 800,500 760,500 738,485",
};

const STOPS: { key: keyof typeof RAW; rgb: [number, number, number]; steps: number }[] = [
  { key: "edge", rgb: [170, 64, 60], steps: 24 },
  { key: "violet", rgb: [88, 64, 214], steps: 16 },
  { key: "blue", rgb: [64, 64, 255], steps: 20 },
  { key: "azure", rgb: [64, 160, 255], steps: 16 },
  { key: "cyan", rgb: [64, 255, 255], steps: 12 },
  { key: "spring", rgb: [64, 255, 160], steps: 10 },
  { key: "green", rgb: [64, 255, 64], steps: 14 },
  { key: "ridge", rgb: [140, 255, 64], steps: 12 },
  { key: "greenIn", rgb: [64, 255, 64], steps: 14 },
  { key: "springIn", rgb: [64, 255, 184], steps: 20 },
  { key: "core", rgb: [64, 255, 238], steps: 1 },
];

const ANGLES = Array.from({ length: 240 }, (_, i) => (i / 240) * Math.PI * 2);

function radiusAt(poly: Pt[], a: number): number {
  const dx = Math.cos(a);
  const dy = Math.sin(a);
  let best = 0;
  for (let i = 0; i < poly.length; i++) {
    const [x1, y1] = poly[i];
    const [x2, y2] = poly[(i + 1) % poly.length];
    const ex = x2 - x1;
    const ey = y2 - y1;
    const den = dx * ey - dy * ex;
    if (Math.abs(den) < 1e-9) continue;
    const qx = x1 - CENTRE[0];
    const qy = y1 - CENTRE[1];
    const t = (qx * ey - qy * ex) / den;
    const u = (qx * dy - qy * dx) / den;
    if (t > best && u >= 0 && u <= 1) best = t;
  }
  return best;
}

const RADII = STOPS.map((s) => {
  const poly = parse(RAW[s.key]);
  return ANGLES.map((a) => radiusAt(poly, a));
});

const ringPoints = (radii: number[]) =>
  ANGLES.map((a, n) => (CENTRE[0] + radii[n] * Math.cos(a)).toFixed(1) + "," + (CENTRE[1] + radii[n] * Math.sin(a)).toFixed(1)).join(" ");

const BANDS: { pts: string; fill: string }[] = STOPS.flatMap((s, k) => {
  const last = k === STOPS.length - 1;
  const next = last ? s : STOPS[k + 1];
  const nextRadii = last ? RADII[k] : RADII[k + 1];
  return Array.from({ length: s.steps }, (_, i) => {
    const f = i / s.steps;
    const pts = ringPoints(RADII[k].map((r, n) => r * (1 - f) + nextRadii[n] * f));
    const c = s.rgb.map((v, n) => Math.round(v * (1 - f) + next.rgb[n] * f));
    return { pts, fill: "rgb(" + c.join(",") + ")" };
  });
});

const LINES: { key: keyof typeof RAW; color: string }[] = [
  { key: "violet", color: "#2000b0" },
  { key: "blue", color: "#0000c8" },
  { key: "azure", color: "#0078e0" },
  { key: "cyan", color: "#00ecf8" },
  { key: "spring", color: "#00e890" },
  { key: "green", color: "#00d800" },
  { key: "greenIn", color: "#00d800" },
  { key: "springIn", color: "#00e090" },
];

function PotentialMap() {
  return (
    <svg viewBox="520 180 508 506" className="h-[506px] w-[508px] shrink-0" role="img" aria-label="Mapa de potenciales">
      <defs>
        <filter id="soft" filterUnits="userSpaceOnUse" x="520" y="180" width="508" height="506"><feGaussianBlur stdDeviation="6" /></filter>
        <filter id="soft2" filterUnits="userSpaceOnUse" x="520" y="180" width="508" height="506"><feGaussianBlur stdDeviation="3" /></filter>
        <radialGradient id="warm"><stop offset="0" stopColor="#f4ff40" /><stop offset=".4" stopColor="#dcff40" stopOpacity=".8" /><stop offset="1" stopColor="#a0ff40" stopOpacity="0" /></radialGradient>
        <radialGradient id="hot"><stop offset="0" stopColor="#ff8c40" /><stop offset=".3" stopColor="#ffc840" /><stop offset=".6" stopColor="#f4ff40" stopOpacity=".8" /><stop offset="1" stopColor="#a0ff40" stopOpacity="0" /></radialGradient>
      </defs>
      {BANDS.map((b, i) => <polygon key={i} points={b.pts} fill={b.fill} />)}
      <g fill="none" strokeLinejoin="round" strokeLinecap="round">
        <polygon points={RAW.ridge} stroke="#90ff40" strokeWidth="14" filter="url(#soft2)" opacity=".8" />
        <path d="M642 288L740 286" stroke="#d8ff40" strokeWidth="20" filter="url(#soft)" />
        <path d="M734 284L752 284L766 322L800 327L924 326" stroke="#fbf840" strokeWidth="24" filter="url(#soft)" />
        <path d="M752 285L760 302L771 322L792 326" stroke="#ffa040" strokeWidth="22" filter="url(#soft)" />
        <path d="M775 327L916 327" stroke="#fff040" strokeWidth="8" filter="url(#soft2)" />
        <path d="M770 326L825 327" stroke="#ffb440" strokeWidth="6" filter="url(#soft2)" />
        <path d="M752 285L755 306" stroke="#ff4840" strokeWidth="13" filter="url(#soft2)" />
        <path d="M769 325L778 326M762 308L767 306" stroke="#ff6440" strokeWidth="11" filter="url(#soft2)" />
      </g>
      <ellipse cx="646" cy="287" rx="22" ry="18" fill="url(#warm)" />
      <ellipse cx="648" cy="286" rx="8" ry="7" fill="#ffcc40" filter="url(#soft2)" opacity=".8" />
      <ellipse cx="638" cy="430" rx="20" ry="56" fill="url(#warm)" opacity=".8" />
      <ellipse cx="929" cy="430" rx="20" ry="60" fill="url(#warm)" opacity=".8" />
      <ellipse cx="647" cy="558" rx="24" ry="25" fill="url(#warm)" />
      <ellipse cx="922" cy="558" rx="24" ry="25" fill="url(#warm)" />
      <ellipse cx="920" cy="327" rx="24" ry="20" fill="url(#hot)" />
      <ellipse cx="796" cy="560" rx="26" ry="21" fill="url(#hot)" />
      <g fill="none" shapeRendering="crispEdges">
        {LINES.map((l) => <polygon key={l.key} points={RAW[l.key]} stroke={l.color} />)}
        <path stroke="#70d800" opacity=".8" d="M637 318L634 305 629 290 630 279 647 267 664 267 670 271 687 271 720 264 753 259 765 262 780 275 787 289 800 302 817 309 850 314 903 316 925 313 937 320 940 328 937 340 937 350 933 360V383L937 390 943 395 946 430 943 444 922 460 917 440 915 425 918 385 918 360 913 350 905 343 890 338 850 337 800 341 780 344 760 343 742 338 733 320 725 305 710 296 690 293 667 295 655 305 648 325 646 350 646 372 653 410 655 430 652 448 647 465 637 452 624 445 623 430 625 403 637 390 645 370 645 345zM647 533L656 549 671 559 656 568 647 572 636 565 632 559 640 549zM923 534L934 549 936 556 934 563 924 572 909 572 905 567 896 559 909 550zM808 547L813 556 823 559 812 565 803 570 794 577 779 575 775 561 783 555 791 547z" />
        <path stroke="#b06820" opacity=".7" d="M752 277L740 286 745 295 748 307 752 316 763 312 770 306 761 300M754 277L762 285 760 293M774 309L763 327 770 331 780 330 791 327 781 323z" />
        <path stroke="#30501c" opacity=".5" d="M636.500 275.500H760.500V322.500H932.500V569.500H636.500z" />
        <path stroke="#604020" opacity=".7" d="M797.500 548v20" />
        <path stroke="#906070" d="M796.500 527.500h6v6h-6zM798 531.500h4" />
      </g>
      <path fill="#202020" d="M651 289h1v1h-1zM761 292h1v1h-1zM785 324h1v1h-1zM890 326h1v1h-1zM892 326h1v1h-1zM921 327h2v2h-2zM935 552h1v1h-1zM935 554h1v1h-1zM918 295h1v1h-1zM931 287h1v1h-1zM866 246h1v1h-1zM876 406h1v1h-1zM886 353h1v1h-1zM795 559h2v1h-2zM801 563h1v1h-1z" />
    </svg>
  );
}

const LEVELS = [
  "0,6142", "0,5961", "0,5780", "0,5598", "0,5417", "0,5235", "0,5054", "0,4872", "0,4691", "0,4510", "0,4328", "0,4147", "0,3965",
  "0,3784", "0,3602", "0,3421", "0,3239", "0,3058", "0,2877", "0,2695", "0,2514", "0,2332", "0,2151", "0,1969", "0,1788", "0,1607",
];

function Legend() {
  return (
    <div className="flex w-[98px] shrink-0 justify-between border-t border-l border-black pr-px pl-2 font-['Liberation_Sans',sans-serif] text-[11px]">
      <ol>
        {LEVELS.map((l) => (
          <li key={l} className="flex h-[22px] items-center">{l}</li>
        ))}
      </ol>
      <div className="w-[42px]">
        <p className="h-[11px] overflow-hidden pr-[2px] text-center text-[10px] leading-[11px]">V</p>
        <div className="border-t border-[#202020] bg-[linear-gradient(#ff0000,#ff5000_9%,#ffa800_17%,#ffff00_23%,#00ff00_42%,#00ffff_65%,#0000ff_84%,#48007c)]">
          {LEVELS.slice(1).map((l) => (
            <div key={l} className="h-[22px] border-b border-[#202020]" />
          ))}
        </div>
        <p className="h-[11px] overflow-hidden pr-[2px] text-center text-[10px] leading-[11px]">V</p>
      </div>
    </div>
  );
}

function Viewport() {
  return (
    <section className="mx-px flex grow flex-col border border-[#5c6c84] border-r-white border-b-white">
      <div className="flex h-[23px] shrink-0 items-stretch justify-between bg-linear-to-b from-[#84b4ec] to-[#e0eefe]">
        <div className="flex">
          <button type="button" aria-label="Primera pestaña" className="w-[14px] pl-[3px]">
            <svg viewBox="0 0 8 8" className="h-2 w-2"><path d="M1 0v8" stroke="#000" strokeWidth="1.500" /><path d="M7 0v8L3 4z" /></svg>
          </button>
          <button type="button" className="ml-1 flex items-center gap-1 bg-white pr-px pl-[21px] font-bold [clip-path:polygon(20px_0,100%_0,100%_100%,0_100%)]">
            <Icon name="ground" />
            Puesta a tierra
          </button>
          {[["detail", "Detalles"], ["doc", "Listados"], ["plan", "Planos"]].map(([icon, text]) => (
            <button key={text} type="button" className="mt-[3px] flex items-center gap-[2px] rounded-tr border-t border-r border-[#e8f6ff] bg-linear-to-b from-[#c8e4fc] to-[#98ccf4] pr-[3px] pl-1">
              <Icon name={icon} />
              {text}
            </button>
          ))}
        </div>
        <div className="flex items-center gap-[10px] pr-[10px]">
          <button type="button" aria-label="Anterior"><svg viewBox="0 0 8 8" className="h-2 w-2"><path d="M6.500 .5v7L2 4z" fill="none" stroke="#000" /></svg></button>
          <button type="button" aria-label="Siguiente"><svg viewBox="0 0 8 8" className="h-2 w-2"><path d="M1.500 .5v7L6 4z" fill="none" stroke="#000" /></svg></button>
          <button type="button" aria-label="Última pestaña"><svg viewBox="0 0 8 8" className="h-2 w-2"><path d="M7 0v8" stroke="#000" strokeWidth="1.500" /><path d="M1 0v8l4-4z" /></svg></button>
        </div>
      </div>
      <div className="flex grow bg-white">
        <div className="relative flex grow pt-[58px] pl-[223px]">
          <PotentialMap />
          <svg viewBox="0 0 36 34" className="absolute bottom-4 left-4 h-[34px] w-9" aria-label="Ejes">
            <path d="M5.500 14v16" stroke="#1818c0" />
            <path d="M5.500 29.500H18" stroke="#c01818" strokeWidth="1.500" />
            <path d="M6 22.500h5l-5 5h6" fill="none" stroke="#1838b0" />
            <path d="M6 0l3 4 3-4M9 4v4" fill="none" stroke="#188018" />
            <path d="M28 22l6 6M34 22l-6 6" stroke="#c02828" />
          </svg>
        </div>
        <Legend />
      </div>
    </section>
  );
}

/* ---------- chapters table ---------- */

const ROWS = [
  { icon: "building", name: "Edificio", marks: "---p", file: "C:\\..._HE1_0001.ctk", date: "11 / 03 / 08", time: "12 : 08 : 14", state: "OK" },
  { icon: "tap", name: "Fontanería", marks: "--xa", file: "C:\\..._HS4_0101.ctk", date: "10 / 03 / 08", time: "09 : 04 : 04", state: "OK" },
  { icon: "tap", name: "Circuito secundario solar", marks: "--xo", file: "C:\\..._HS4_0103.ctk", date: "06 / 03 / 08", time: "13 : 19 : 34", state: "OK" },
  { icon: "pipes", name: "Saneamiento", marks: "--xg", file: "C:\\..._HS5_0118.ctk", date: "12 / 03 / 08", time: "11 : 57 : 54", state: "OK" },
  { icon: "ground", name: "Puesta a tierra", marks: "xx-g", file: "-", date: "-", time: "-", state: "OK" },
];

const DOTS: Record<string, string> = {
  a: "block h-[14px] w-[14px] rounded-full border border-[#b0b0b0] bg-[#84fce0]",
  o: "block h-[14px] w-[14px] rounded-full border border-[#b0b0b0] bg-[#fcc080]",
  g: "block h-[14px] w-[14px] rounded-full border border-[#b0b0b0] bg-[#dcdcdc]",
};

function Mark({ kind }: { kind: string }) {
  if (kind === "x") return <Icon name="check" />;
  if (kind === "p") return <Icon name="palette" />;
  if (DOTS[kind]) return <span className={DOTS[kind]} />;
  return null;
}

const cell = "h-5 border-r border-b border-[#ececec] p-0";
const th = "h-[23px] border-r border-b border-[#dcdcdc] p-0 font-normal";

function Chapters() {
  return (
    <section className="mt-1 flex h-[264px] shrink-0 flex-col">
      <div className="flex h-5 shrink-0 items-center justify-between bg-linear-to-b from-[#fbe2bc] to-[#f6c468] pr-1 pl-1">
        <h2>Capítulos</h2>
        <PinClose />
      </div>
      <div className="flex grow flex-col bg-[#a8d8f8] px-[3px] pt-[3px]">
        <div className="flex h-[26px] shrink-0 items-center bg-linear-to-b from-[#dcecfe] to-[#84b0e8] pl-[3px]">
          <Tool icon="star" label="Nuevo capítulo" />
          <Arrow label="Lista de capítulos" />
          <Sep />
          <Tool icon="copy" label="Copiar capítulo" />
          <Tool icon="import" label="Importar capítulo" />
          <Sep />
          <Tool icon="cut" label="Borrar capítulo" />
          <Sep />
          <Tool icon="pens" label="Editar capítulo" />
          <Tool icon="eye" label="Visualizar" />
          <Tool icon="ball" label="Estado" />
          <Tool icon="palette" label="Color" />
          <Sep />
          <Tool icon="tools" label="Opciones" />
          <Tool icon="grid" label="Columnas" />
        </div>
        <div className="h-[190px] overflow-hidden border border-[#7c94b4] bg-white">
          <table className="w-full table-fixed border-separate border-spacing-0 text-center">
            <colgroup>
              <col className="w-[156px]" />
              <col className="w-8" />
              <col className="w-8" />
              <col className="w-8" />
              <col className="w-8" />
              <col className="w-[111px]" />
              <col className="w-[70px]" />
              <col className="w-[66px]" />
              <col className="w-[132px]" />
              <col className="w-[100px]" />
              <col />
            </colgroup>
            <thead className="bg-linear-to-b from-white to-[#f2f3f5]">
              <tr>
                <th className={th + " pl-[5px] text-left"}>Capítulo</th>
                {["pens", "eye", "ball", "palette"].map((n) => (
                  <th key={n} className={th + " pl-px"}><Icon name={n} /></th>
                ))}
                <th className={th}>Fichero</th>
                <th className={th}>Fecha</th>
                <th className={th}>Hora</th>
                <th className={th}>Estado</th>
                <th className={th}>Usuario</th>
                <th className={th} />
              </tr>
            </thead>
            <tbody>
              {ROWS.map((r, i) => {
                const c = i === 0 ? cell + " bg-[#3399ff] text-white" : cell;
                return (
                  <tr key={r.name}>
                    <td className={cell}>
                      <span className="flex h-[19px] items-center pl-1">
                        <Icon name={r.icon} />
                        <span className={i === 0 ? "flex h-full grow items-center bg-[#3399ff] text-white" : "whitespace-nowrap"}>{r.name}</span>
                      </span>
                    </td>
                    {r.marks.split("").map((m, j) => (
                      <td key={j} className={cell}><span className="flex justify-center"><Mark kind={m} /></span></td>
                    ))}
                    <td className={c}>{r.file}</td>
                    <td className={c}>{r.date}</td>
                    <td className={c}>{r.time}</td>
                    <td className={c}>{r.state}</td>
                    <td className={c} />
                    <td className={cell} />
                  </tr>
                );
              })}
              {[0, 1, 2, 3].map((k) => (
                <tr key={k}>
                  {Array.from({ length: 11 }, (_, j) => <td key={j} className={cell} />)}
                </tr>
              ))}
            </tbody>
          </table>
        </div>
        <div className="pt-px">
          <PanelTabs items={[{ icon: "star", text: "Capítulos" }, { icon: "errors", text: "Errores" }, { icon: "notes", text: "Notas" }, { icon: "users", text: "Usuarios" }]} />
        </div>
      </div>
    </section>
  );
}

function StatusBar() {
  return (
    <footer className="flex h-5 shrink-0 items-center border-t border-[#8c98a8] border-b border-b-[#3c1414] bg-[#f0edeb] pl-1">
      <p className="grow">Para obtener ayuda presione F1</p>
      <p className="w-[66px] border-l border-[#d8d4d0] pl-[3px] text-[#c81414]">7,71</p>
      <p className="w-[66px] border-l border-[#d8d4d0] pl-[3px] text-[#147814]">11,01</p>
      <p className="w-[66px] border-l border-[#d8d4d0] pl-[3px] text-[#1414b4]">0,00</p>
      <p className="flex gap-[9px] border-l border-[#d8d4d0] pr-[6px] pl-[2px] text-[#84807c]">
        <span>ORT</span>
        <span>REJ</span>
        <span>IMA</span>
        <span>MAY</span>
        <span className="text-black">NUM</span>
      </p>
    </footer>
  );
}

export default function App() {
  return (
    <div className="flex min-h-screen flex-col bg-[#8db5e3] font-['Open_Sans','Noto_Sans',sans-serif] text-[11px] leading-4 text-[#101010]">
      <TitleBar />
      <Toolbars />
      <main className="flex grow">
        <LeftStrip />
        <ProjectPanel />
        <div className="flex min-w-0 grow flex-col pl-1">
          <Viewport />
          <Chapters />
        </div>
        <RightStrip />
      </main>
      <StatusBar />
    </div>
  );
}
